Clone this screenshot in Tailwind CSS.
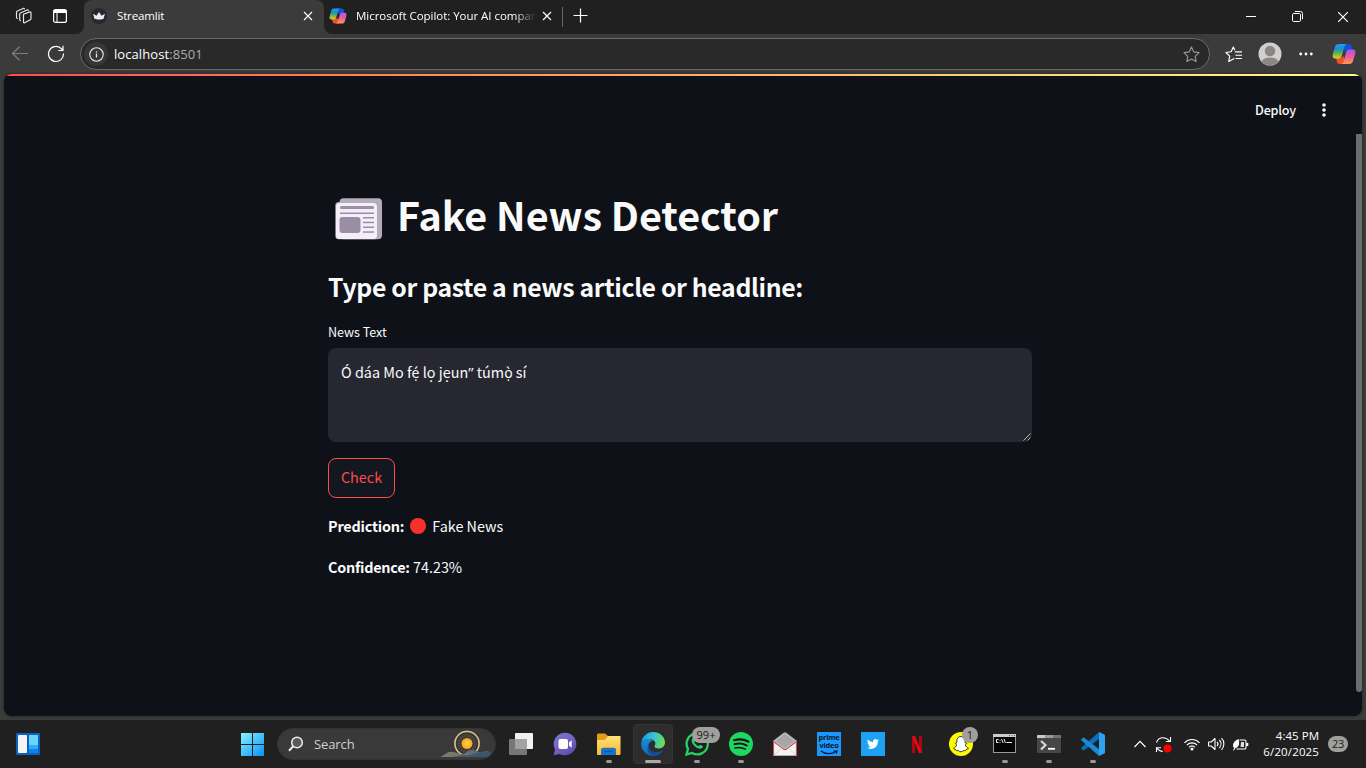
<!DOCTYPE html>
<html lang="en">
<head>
<meta charset="utf-8">
<title>Streamlit</title>
<script src="https://cdn.jsdelivr.net/npm/@tailwindcss/browser@4"></script>
</head>
<body class="w-[1366px] h-[768px] overflow-hidden bg-[#3b3b3b] text-white font-['Open_Sans',sans-serif] flex flex-col whitespace-nowrap">
<svg width="0" height="0" class="absolute">
  <defs>
    <linearGradient id="cpA" x1="0" y1="0" x2="0" y2="1"><stop offset="0" stop-color="#1e9df1"/><stop offset=".35" stop-color="#1c8fd0"/><stop offset=".65" stop-color="#5fb84e"/><stop offset="1" stop-color="#f4c90c"/></linearGradient>
    <linearGradient id="cpB" x1="0" y1="0" x2="0" y2="1"><stop offset="0" stop-color="#a657f0"/><stop offset=".5" stop-color="#ee5a9c"/><stop offset="1" stop-color="#ff9a4a"/></linearGradient>
    <symbol id="copilot" viewBox="0 0 24 24">
      <path d="M10 2h7c1.500 0 2.200 1 2.600 2.300L20.500 8H16c-2 0-2.500 1-3 2.500z" fill="#1450d8"/>
      <path d="M14 22H7.500C6 22 5.300 21 4.900 19.700L4 16h4c2 0 2.700-1 3.200-2.500z" fill="#f2502c"/>
      <path d="M7.500 2H15c-1.800.4-2.300 1.700-2.800 3.400L9.700 14c-.5 1.600-1.300 2.500-3 2.500H3.200C.6 16.500.2 14.500.9 12l2.200-7.500C3.700 2.800 5 2 7.500 2z" fill="url(#cpA)"/>
      <path d="M16.500 22H9c1.800-.4 2.300-1.700 2.800-3.400l2.500-8.600c.5-1.600 1.300-2.500 3-2.500h3.500c2.600 0 3 2 2.300 4.500l-2.200 7.500c-.6 1.700-1.900 2.500-4.400 2.500z" fill="url(#cpB)"/>
    </symbol>
  </defs>
</svg>

<!-- Tab strip -->
<header class="h-[34px] shrink-0 bg-[#202020] flex">
  <div class="w-[84px] bg-[#3b3b3b] flex"><div class="w-full bg-[#202020] rounded-br-lg flex items-center pl-[15px] gap-[19px]">
    <svg width="18" height="18" viewBox="0 0 18 18" fill="none" stroke="#e8e8e8" stroke-width="1.150" stroke-linejoin="round" stroke-linecap="round" class="-mt-[2px]"><path d="M8.500 7.300l6.300-2.400c.7-.2 1.200.1 1.200.8v5.800c0 .6-.2 1-.8 1.200l-5.500 3c-.7.3-1.200 0-1.200-.7z"/><path d="M5.500 13.700c-.5 0-.8-.3-.8-.9V7.200c0-.6.200-1 .8-1.300l6.600-3c.6-.2 1 0 1.200.5"/><path d="M2.300 11.500c-.5 0-.8-.3-.8-.9V5.400c0-.6.200-1 .8-1.300l6-2.700c.6-.2 1 0 1.200.5"/></svg>
    <svg width="16" height="16" viewBox="0 0 16 16" class="-mt-[2px]"><rect x="1.600" y="1.600" width="12.800" height="12.800" rx="2" fill="none" stroke="#fff" stroke-width="1.200"/><path d="M1.500 5V3.500a2 2 0 012-2h9a2 2 0 012 2V5z" fill="#fff"/><path d="M5 5v9.500" stroke="#fff"/></svg>
  </div></div>
  <div class="w-[240px] bg-[#202020]"><div class="h-full bg-[#3b3b3b] rounded-t-lg flex items-center pl-[7px] pr-[11px]">
    <svg width="16" height="16" viewBox="0 0 16 16" class="-mt-[2px]"><circle cx="8" cy="8" r="8" fill="#262730"/><path d="M2 5.700l3.500 2L8 4l2.500 3.700 3.500-2-1.600 5.300c-2 .6-6.800.6-8.800 0z" fill="#e9e9ee"/></svg>
    <span class="ml-[10px] -mt-[2px] text-[11.500px] tracking-[-0.15px] grow">Streamlit</span>
    <svg width="10" height="10" viewBox="0 0 10 10" stroke="#fff" stroke-width="1.200" class="-mt-[2px]"><path d="M1 1l8 8M9 1L1 9"/></svg>
  </div></div>
  <div class="w-[240px] bg-[#3b3b3b]"><div class="h-full bg-[#202020] rounded-bl-lg flex items-center pl-[5px]">
    <svg width="18" height="18" class="-mt-[2px]"><use href="#copilot"/></svg>
    <div class="ml-[9px] -mt-[2px] w-[180px] overflow-hidden text-[11.500px] tracking-[-0.03px] [mask-image:linear-gradient(to_right,black_158px,transparent_180px)]">Microsoft Copilot: Your AI companion</div>
    <svg width="10" height="10" viewBox="0 0 10 10" stroke="#fff" stroke-width="1.200" class="ml-[6px] -mt-[2px]"><path d="M1 1l8 8M9 1L1 9"/></svg>
    <div class="ml-[10px] w-px h-[20px] bg-[#666]"></div>
  </div></div>
  <div class="grow flex items-center pl-[9px]">
    <svg width="15" height="15" viewBox="0 0 15 15" stroke="#fff" stroke-width="1.200" class="-mt-[3px]"><path d="M7.500 .5v14M.5 7.500h14"/></svg>
    <div class="grow"></div>
    <svg width="10" height="10" viewBox="0 0 10 10" stroke="#fff"><path d="M0 4.500h10"/></svg>
    <svg width="11" height="11" viewBox="0 0 11 11" fill="none" stroke="#fff" class="ml-[36px] -mt-[1px]"><rect x=".5" y="2.500" width="8" height="8" rx="1.200"/><path d="M2.800 .5h5.700a2 2 0 012 2v5.700"/></svg>
    <svg width="10" height="10" viewBox="0 0 10 10" stroke="#fff" stroke-width="1.200" class="ml-[35px] mr-[18px]"><path d="M0 0l10 10M10 0L0 10"/></svg>
  </div>
</header>

<!-- Address bar -->
<div class="h-[40px] shrink-0 flex items-center pl-[11px]">
  <svg width="18" height="16" viewBox="0 0 18 16" fill="none" stroke="#808080" stroke-width="1.200"><path d="M17 7.500H1.500M8.500 .8L1.500 7.500l7 6.700"/></svg>
  <svg width="18" height="18" viewBox="0 0 18 18" fill="none" stroke="#fff" stroke-width="1.200" class="ml-[18px]"><path d="M16.500 8.500A7.500 7.500 0 1113.800 3.200L16 5.200M16 .8v4.700h-4.700"/></svg>
  <div class="ml-[15px] w-[1130px] h-[32px] rounded-full border border-[#6a6a6a] bg-[#292929] flex items-center pl-[3px] pr-[9px]">
    <span class="size-[24px] rounded-full bg-[#363636] flex items-center justify-center"><svg width="15" height="15" viewBox="0 0 15 15" fill="none" stroke="#e8e8e8" stroke-width="1.100"><circle cx="7.500" cy="7.500" r="6.700"/><path d="M7.500 6.600v4M7.500 4.200v1.200" stroke-width="1.300"/></svg></span>
    <span class="ml-[6px] mt-[1px] text-[13px] tracking-[0.08px] grow">localhost<span class="text-[#ababab]">:8501</span></span>
    <svg width="17" height="17" viewBox="0 0 17 17" fill="none" stroke="#999" stroke-width="1.100" stroke-linejoin="round"><path d="M8.500 1l2.300 4.900 5.300.7-3.900 3.700 1 5.300-4.700-2.600-4.700 2.600 1-5.300L.9 6.600l5.300-.7z"/></svg>
  </div>
  <svg width="18" height="17" viewBox="0 0 18 17" fill="none" stroke="#fff" stroke-width="1.150" stroke-linejoin="round" class="ml-[15px]"><path d="M9.800 4.300L8.300 1 6.100 5.700l-5.200.8 3.800 3.700-1 5.200 4.600-2.500 1-.6M9.800 5.800H17M10.500 9.200H17M10.500 12.500H17" /></svg>
  <svg width="24" height="24" viewBox="0 0 24 24" class="ml-[15px]"><circle cx="12" cy="12" r="11.500" fill="#d2d0ce"/><circle cx="12" cy="9" r="5.300" fill="#8a8886"/><path d="M3.500 19.500c2-3.200 5-4 8.500-4s6.500.8 8.500 4a11.500 11.500 0 01-17 0z" fill="#8a8886"/></svg>
  <svg width="14" height="4" viewBox="0 0 14 4" fill="#fff" class="ml-[17px]"><circle cx="1.700" cy="2" r="1.400"/><circle cx="7" cy="2" r="1.400"/><circle cx="12.300" cy="2" r="1.400"/></svg>
  <svg width="24" height="24" class="ml-[19px]"><use href="#copilot"/></svg>
</div>

<!-- App viewport -->
<main class="mx-[4px] h-[642px] shrink-0 rounded-lg overflow-hidden bg-[#0e1117] text-[#fafafa] font-['Noto_Sans_CJK_SC',sans-serif] shadow-[0_0_3px_rgba(0,0,0,.5)] flex flex-col">
  <div class="h-[2px] shrink-0 bg-linear-to-r from-[#ff4b4b] to-[#fffd80]"></div>
  <div class="h-[58px] shrink-0 flex items-center justify-end pr-[36px] pt-[9px]">
    <span class="text-[12.600px] leading-[20px] font-medium tracking-[-0.2px]">Deploy</span>
    <svg width="4" height="14" viewBox="0 0 4 14" fill="#fafafa" class="ml-[26px]"><circle cx="2" cy="2" r="1.800"/><circle cx="2" cy="7" r="1.800"/><circle cx="2" cy="12" r="1.800"/></svg>
  </div>
  <div class="grow flex">
    <section class="ml-[324px] w-[704px] pt-[53px]">
      <h1 class="h-[53px] flex items-center text-[39.500px] leading-[53px] font-bold">
        <svg width="47" height="42" viewBox="0 0 47 42" class="ml-[7px] mt-[11px] mr-[15px]"><rect x="4.500" y=".3" width="42.500" height="41" rx="4" fill="#b4acbc"/><rect x=".3" y="4" width="43" height="37.300" rx="3.500" fill="#b4acbc"/><rect x="1" y="5" width="41" height="36" rx="3.500" fill="#f3eef8"/><g fill="#998ea4"><rect x="5" y="8" width="34" height="3" rx="1.500"/><rect x="5" y="14.500" width="34" height="1.500"/><rect x="4.500" y="19" width="21" height="16" rx="3"/><rect x="28" y="19" width="11" height="1.500"/><rect x="28" y="23.700" width="11" height="1.500"/><rect x="28" y="28.500" width="11" height="1.500"/><rect x="28" y="33.300" width="11" height="1.500"/></g></svg>
        <span class="tracking-[-0.06px]">Fake News Detector</span>
      </h1>
      <h2 class="mt-[29px] text-[24.800px] leading-[34px] font-semibold tracking-[-0.35px]">Type or paste a news article or headline:</h2>
      <p class="mt-[19px] text-[12.600px] leading-[20px] tracking-[-0.05px]">News Text</p>
      <div class="relative mt-[6px] h-[94px] rounded-lg bg-[#262730] px-[13px] pt-[12px] text-[14.400px] leading-[24px]">Ó dáa Mo f<span class="font-['Noto_Sans'] text-[14px]">ẹ́</span> lọ jẹun<span class="font-['Open_Sans'] text-[15px]">”</span> túm<span class="font-['Noto_Sans'] text-[14px]">ọ̀</span> sí
        <svg width="8" height="8" viewBox="0 0 8 8" stroke="#c8c8c8" stroke-width=".9" class="absolute right-[1px] bottom-[1px]"><path d="M.5 7.500l7-7M4.500 7.500l3-3"/></svg>
      </div>
      <div class="mt-[16px] w-[67px] h-[40px] rounded-lg border border-[#ff4b4b] bg-[#131720] text-[#ff4b4b] text-[14.400px] leading-[36px] text-center">Check</div>
      <p class="mt-[16px] h-[24px] text-[14.400px] leading-[24px] flex items-center"><b class="tracking-[-0.2px]">Prediction:</b><span class="size-[16px] rounded-full bg-[#f8312f] ml-[6px] mr-[6px]"></span><span>Fake News</span></p>
      <p class="mt-[17px] text-[14.400px] leading-[24px]"><b class="tracking-[-0.25px]">Confidence:</b> 74.23%</p>
    </section>
    <div class="ml-auto w-[6px] h-[558px] rounded-b-[3px] bg-[#6b6c70]"></div>
  </div>
</main>

<!-- Taskbar -->
<footer class="mt-[4px] h-[48px] shrink-0 bg-[#202020] flex items-center">
  <svg width="24" height="22" viewBox="0 0 24 22" class="ml-[16px]"><rect width="24" height="22" rx="1" fill="#0b63bd"/><rect x="2" y="2" width="9" height="18" rx="1" fill="#f4f4f4"/><path d="M13 2h9v10h-9z" fill="#68d6ff"/><path d="M13 12h9v4h-9z" fill="#2cabf8"/><path d="M13 16h9v4h-9z" fill="#0a84ea"/></svg>
  <svg width="23" height="23" viewBox="0 0 23 23" class="ml-[201px]"><defs><linearGradient id="win" x1="0" y1="0" x2="1" y2="1"><stop stop-color="#86f2ff"/><stop offset="1" stop-color="#0693f8"/></linearGradient></defs><path d="M0 0h11v11H0zM12 0h11v11H12zM0 12h11v11H0zM12 12h11v11H12z" fill="url(#win)"/></svg>
  <div class="ml-[13px] w-[219px] h-[32px] rounded-full bg-[#393939] border border-[#343434] flex items-center pl-[10px] overflow-hidden">
    <svg width="16" height="16" viewBox="0 0 16 16" fill="#5a5a5a" stroke="#eee" stroke-width="1.500"><circle cx="9" cy="6.500" r="5.300"/><path d="M5.200 10.300L1 14.700" stroke-width="2"/></svg>
    <span class="ml-[10px] mt-[1px] text-[13px] tracking-[-0.1px] text-[#d0d0d0] grow">Search</span>
    <svg width="54" height="30" viewBox="0 0 54 30" class="mr-[2px]"><defs><linearGradient id="hill" x1="0" x2="1"><stop stop-color="#8b7a66"/><stop offset=".5" stop-color="#6d7377"/><stop offset="1" stop-color="#365873"/></linearGradient><radialGradient id="sun"><stop stop-color="#ffd84e"/><stop offset="1" stop-color="#f5a21d"/></radialGradient></defs><circle cx="28" cy="14.500" r="12" fill="#33363a" stroke="#e7b56c" stroke-width="1.500"/><circle cx="28" cy="14.500" r="12.500" fill="none" stroke="#bccfcf" stroke-width=".6"/><circle cx="28" cy="14.500" r="8" fill="none" stroke="#6b5632" stroke-width="3" stroke-dasharray="1 1.500"/><circle cx="28" cy="14.500" r="5.500" fill="url(#sun)"/><path d="M1 28c6-2 7-6 12-5 5 0 7 3 11 2 4-1 6-5 11-4 4 1 5 3 8 2s6-2 9 1l-2 4z" fill="url(#hill)"/><path d="M13 28c7 0 8-3 13-2 8 1 13-4 25-2l-2 4z" fill="#385267" opacity=".75"/></svg>
  </div>
  <nav class="ml-[3px] flex h-full">
    <div class="w-[44px] flex items-center justify-center"><svg width="24" height="22" viewBox="0 0 24 22"><rect x="6" width="18" height="16" rx="1" fill="#f1f1f1"/><rect y="6" width="18" height="16" rx="1" fill="#777"/><path d="M6 6h12v10H6z" fill="#a3a3a3"/></svg></div>
    <div class="w-[44px] flex items-center justify-center"><svg width="24" height="24" viewBox="0 0 24 24"><defs><linearGradient id="chat" x1="0" y1="0" x2=".7" y2="1"><stop stop-color="#6a7fd0"/><stop offset=".5" stop-color="#7765c4"/><stop offset="1" stop-color="#5a4cae"/></linearGradient></defs><path d="M12 .7a11.300 11.300 0 11-5.400 21.200L.6 23.300 2 17.400A11.300 11.300 0 0112 .7z" fill="url(#chat)"/><rect x="5.500" y="7" width="9.500" height="10" rx="2" fill="#fff"/><path d="M16 10.500l2.700-2.300v7.600L16 13.500z" fill="#fff"/></svg></div>
    <div class="w-[44px] flex flex-col items-center"><svg width="26" height="24" viewBox="0 0 26 24" class="mt-[12px] shrink-0"><defs><linearGradient id="fold" x1="0" y1="0" x2="0" y2="1"><stop stop-color="#ffe07c"/><stop offset="1" stop-color="#fdb928"/></linearGradient></defs><path d="M1 3c0-1 .5-1.500 1.500-1.500H9L12 4v6H1z" fill="#e29d19"/><path d="M1 8h8l3-4h12.500v18c0 .6-.4 1-1 1H2c-.6 0-1-.4-1-1z" fill="url(#fold)"/><path d="M5 23v-5c0-1.500 1-2.300 2.300-2.300h10.400c1.400 0 2.300.8 2.300 2.300v5z" fill="#1476d0"/><path d="M8.500 19.500h8" stroke="#0c4b96" stroke-width="1.300"/></svg><i class="mt-[4px] w-[6px] h-[3px] rounded-full bg-[#999]"></i></div>
    <div class="w-[44px] flex flex-col items-center"><div class="mt-[4px] w-[40px] h-[40px] rounded-[4px] bg-[#2d2d2d] border border-[#343434] flex flex-col items-center"><svg width="24" height="24" viewBox="0 0 24 24" class="mt-[7px] shrink-0"><defs><linearGradient id="edT" x1="0" y1=".3" x2="1" y2=".5"><stop stop-color="#1b9be2"/><stop offset=".5" stop-color="#35c1d8"/><stop offset="1" stop-color="#6de04c"/></linearGradient><linearGradient id="edL" x1="0" y1="0" x2="0" y2="1"><stop stop-color="#1a8bd8"/><stop offset="1" stop-color="#1566c0"/></linearGradient></defs><path d="M.3 11C1 4.700 5.800 0 12 0c7 0 12 5 12 10.500 0 3.800-2.900 6-6.300 6-2.600 0-4.200-1-4.200-2 0-.7.900-1.200.9-2.900C14.400 9 11.500 7 8 7c-3.200 0-6.300 1.500-7.700 4z" fill="url(#edT)"/><path d="M.2 11.500C1.300 8.800 4.200 7 7.500 7c2 0 3.700.6 4.800 1.500-3 .3-5 3-5 6 0 4.500 3.600 8.500 8 9A12 12 0 01.2 11.500z" fill="url(#edL)"/><path d="M8.300 11.500c-1.400 5 2 8.800 6.500 8.800 2.700 0 4.800-.8 6.700-2 .6-.3.900 0 .5.600A12 12 0 0112 24C6.800 22.500 4.700 16.500 8.300 11.500z" fill="#124e9c"/></svg><i class="mt-[4px] w-[16px] h-[3px] rounded-full bg-[#a9a9a5]"></i></div></div>
    <div class="w-[44px] relative flex flex-col items-center"><svg width="24" height="24" viewBox="0 0 24 24" class="mt-[12px]" fill="none" stroke="#25d366"><path d="M1.500 22.500L3 17a10.600 10.600 0 114 4z" stroke-width="2.300"/><path d="M8.400 6c-.7 0-1.800 1-1.800 2.500 0 3.600 4.800 8.300 8.600 8.300 1.600 0 2.700-1 2.800-2.500l-3-1.500-1.300 1.500c-2-.7-3.600-2.200-4.500-4.200L10.300 9 9.100 6z" fill="#25d366" stroke="none"/></svg><i class="mt-[4px] w-[6px] h-[3px] rounded-full bg-[#999]"></i><span class="absolute left-[17px] top-[7px] w-[28px] h-[16px] rounded-full bg-[#a09f9b] text-[#1a1a1a] text-[11px] leading-[16px] text-center">99+</span></div>
    <div class="w-[44px] flex flex-col items-center"><svg width="24" height="24" viewBox="0 0 24 24" class="mt-[12px]"><circle cx="12" cy="12" r="12" fill="#1ed760"/><g fill="none" stroke="#151515" stroke-linecap="round"><path d="M5 8.200c5-1.400 10.300-1 14.300 1.400" stroke-width="2.200"/><path d="M5.500 12.200c4.300-1.200 8.800-.7 12.300 1.300" stroke-width="1.900"/><path d="M6 15.900c3.500-.9 7-.6 10.300 1.300" stroke-width="1.500"/></g></svg><i class="mt-[4px] w-[6px] h-[3px] rounded-full bg-[#999]"></i></div>
    <div class="w-[44px] flex items-center justify-center"><svg width="24" height="24" viewBox="0 0 24 24"><path d="M0 9L11 .5h2L24 9v14.500H0z" fill="#b9b9b9"/><path d="M0 9.500l12 9 12-9v14H0z" fill="#f4f4f4"/><path d="M3 9l9-7 9 7-9 7z" fill="#a6a6a6"/><path d="M.6 9.500v14M23.400 9.500v14M1 10l10 7.500h2L23 10" fill="none" stroke="#d9353b" stroke-width="1"/><path d="M1 23l8-7M23 23l-8-7" stroke="#ccc" stroke-width=".8"/></svg></div>
    <div class="w-[44px] flex items-center justify-center"><div class="size-[24px] bg-[#1a98ff] text-[#07182a] font-bold text-[7.500px] tracking-[-0.25px] text-center pt-[2px] flex flex-col items-center"><span class="h-[7px] leading-[7px]">prime</span><span class="h-[8px] leading-[8px]">video</span><svg width="18" height="5" viewBox="0 0 18 5" fill="none" stroke="#07182a" stroke-width="1.200" class="mt-[1px]"><path d="M1 1c4 3.500 11 3.500 15 .5M13.500 1H17l-.8 2.700"/></svg></div></div>
    <div class="w-[44px] flex items-center justify-center"><div class="size-[24px] bg-[#1da1f2] flex items-center justify-center"><svg width="12" height="12" viewBox="0 0 24 24" fill="#fff"><path d="M23.950 4.570a10 10 0 01-2.820.77 4.960 4.960 0 002.160-2.720c-.95.550-2 .96-3.130 1.180a4.920 4.920 0 00-8.380 4.480C7.690 8.090 4.070 6.130 1.640 3.160a4.820 4.820 0 00-.67 2.480c0 1.710.87 3.210 2.190 4.100a4.900 4.900 0 01-2.230-.62v.06a4.920 4.920 0 003.950 4.830 5 5 0 01-2.210.08 4.940 4.940 0 004.600 3.420A9.870 9.870 0 010 19.540a13.990 13.990 0 007.560 2.210c9.050 0 14-7.500 14-13.980 0-.21 0-.42-.02-.63a9.940 9.940 0 002.410-2.570z"/></svg></div></div>
    <div class="w-[44px] flex items-center justify-center"><svg width="10" height="17" viewBox="0 0 10 17"><path d="M0 0h3v17l-3 .1zM7 0h3v17.100L7 17z" fill="#b1060f"/><path d="M0 0h3l7 17.100L7 17z" fill="#e50914"/></svg></div>
    <div class="w-[44px] relative flex items-center justify-center"><svg width="24" height="24" viewBox="0 0 24 24"><circle cx="12" cy="12" r="12" fill="#fffc00"/><path d="M12 4.500c-2.700 0-4.200 2-4.200 4.500v2c-.6.100-1.400-.3-1.500.4 0 .7 1.300.8 1.300 1.500-.2 1.500-1.600 2.700-3 3.200 0 1 1.800 1.200 2.300 1.500.3.400 0 1 .8 1h1.600c1 .3 1.500 1.200 2.700 1.200s1.700-.9 2.700-1.200h1.600c.8 0 .5-.6.8-1 .5-.3 2.300-.5 2.300-1.500-1.400-.5-2.800-1.700-3-3.200 0-.7 1.300-.8 1.300-1.500-.1-.7-.9-.3-1.500-.4V9c0-2.500-1.500-4.500-4.200-4.500z" fill="#fff" stroke="#111" stroke-width=".8"/></svg><span class="absolute left-[23px] top-[7px] size-[16px] rounded-full bg-[#a09f9b] text-[#222] text-[11px] leading-[16px] text-center">1</span></div>
    <div class="w-[44px] flex flex-col items-center"><svg width="24" height="24" viewBox="0 0 24 24" class="mt-[12px]"><rect x=".5" y="2.500" width="22" height="18" fill="#050505" stroke="#999"/><path d="M0 2h23v3H0z" fill="#c9ced3"/><path d="M16 3.500h1M18.500 3.500h1M21 3.500h1" stroke="#4b657e"/><path d="M5.500 7.500H3.500v3h2M7 8v.8M7 10v.8M8.500 7l1.700 4M11 7l1.500 4M13.500 10.500H19" stroke="#ededed" fill="none" stroke-width="1"/></svg><i class="mt-[4px] w-[6px] h-[3px] rounded-full bg-[#999]"></i></div>
    <div class="w-[44px] flex flex-col items-center"><svg width="24" height="24" viewBox="0 0 24 24" class="mt-[12px]"><rect y="3" width="24" height="18" rx="1" fill="#464646"/><path d="M0 6V4c0-.6.400-1 1-1h7v3z" fill="#c8c8c8"/><path d="M8 3h8v3H8z" fill="#999"/><path d="M16 3h7c.6 0 1 .4 1 1v2h-8z" fill="#737373"/><path d="M4 9l4.500 4L4 17.500" fill="none" stroke="#d6d6d6" stroke-width="2.200"/><path d="M11 16.800h7" stroke="#fff" stroke-width="1.800"/></svg><i class="mt-[4px] w-[6px] h-[3px] rounded-full bg-[#999]"></i></div>
    <div class="w-[44px] flex flex-col items-center"><svg width="24" height="24" viewBox="0 0 24 24" class="mt-[12px]"><path d="M18 0l5.300 2.500c.4.200.7.600.7 1v17c0 .4-.3.800-.7 1L18 24z" fill="#2ca3f1"/><path d="M18 0L.5 15.500c-.4.400-.4 1 0 1.400L2 18.200c.4.300.9.300 1.200.1L18 7z" fill="#0a6fb9"/><path d="M18 24L.5 8.500c-.4-.4-.4-1 0-1.400L2 5.800c.4-.3.900-.3 1.200-.1L18 17z" fill="#168bd4"/></svg><i class="mt-[4px] w-[6px] h-[3px] rounded-full bg-[#999]"></i></div>
  </nav>
  <div class="ml-auto mr-[18px] flex items-center">
    <svg width="12" height="8" viewBox="0 0 12 8" fill="none" stroke="#fff" stroke-width="1.200"><path d="M.5 7L6 1.300 11.500 7"/></svg>
    <svg width="17" height="17" viewBox="0 0 17 17" fill="none" stroke="#fff" stroke-width="1.150" class="ml-[9px]"><path d="M1.500 6.500C2.600 3.300 5 1.700 8 1.700c3 0 5 1.400 6.500 3.300M15.500 1v4.500h-4.500M1.500 16v-4.300H6M1.800 12c1.500 2 3.200 3.300 6 3.500"/><circle cx="12.500" cy="12.500" r="4" fill="#f00" stroke="none"/></svg>
    <svg width="16" height="13" viewBox="0 0 16 13" fill="none" stroke="#fff" stroke-width="1.200" class="ml-[12px]"><path d="M.5 4.800c4.200-4.400 10.800-4.400 15 0M2.800 7.200c3-3 7.400-3 10.400 0M5 9.400c1.800-1.700 4.200-1.700 6 0"/><circle cx="8" cy="11" r="1.500" fill="#fff" stroke="none"/></svg>
    <svg width="17" height="14" viewBox="0 0 17 14" fill="none" stroke="#fff" stroke-width="1.100" stroke-linejoin="round" class="ml-[8px]"><path d="M.6 5v4h2.600L7 12.500v-11L3.200 5z"/><path d="M9 4.800c1.200 1.300 1.200 3.100 0 4.400M11.300 3c2.200 2.300 2.200 5.700 0 8M13.500 1.200c3.200 3.200 3.200 8.400 0 11.600"/></svg>
    <svg width="17" height="13" viewBox="0 0 17 13" fill="none" stroke="#fff" stroke-width="1.100" class="ml-[7px]"><path d="M7.500 2h5a1.500 1.500 0 011.500 1.500v6a1.500 1.500 0 01-1.500 1.500h-8"/><path d="M15.300 5v3" stroke-width="2"/><path d="M9 4h3v5H8.500z" fill="#ddd" stroke="none"/><path d="M6.500 1C3 2.500 1 4.500 1 7.500c0 1 .5 2 1.300 2.500L1 12.200l1 .3L3.400 10C7 9.500 8 5.500 6.500 1z" fill="#fff" stroke="none"/></svg>
    <div class="ml-[12px] w-[58px] flex flex-col items-end text-[11.500px] leading-[16px]"><div class="tracking-[0.02px]">4:45 PM</div><div class="tracking-[0.13px]">6/20/2025</div></div>
    <div class="ml-[9px] w-[20px] h-[16px] rounded-full bg-[#a09f9b] text-[#1a1a1a] text-[11px] leading-[16px] tracking-[-0.3px] text-center">23</div>
  </div>
</footer>
</body>
</html>
